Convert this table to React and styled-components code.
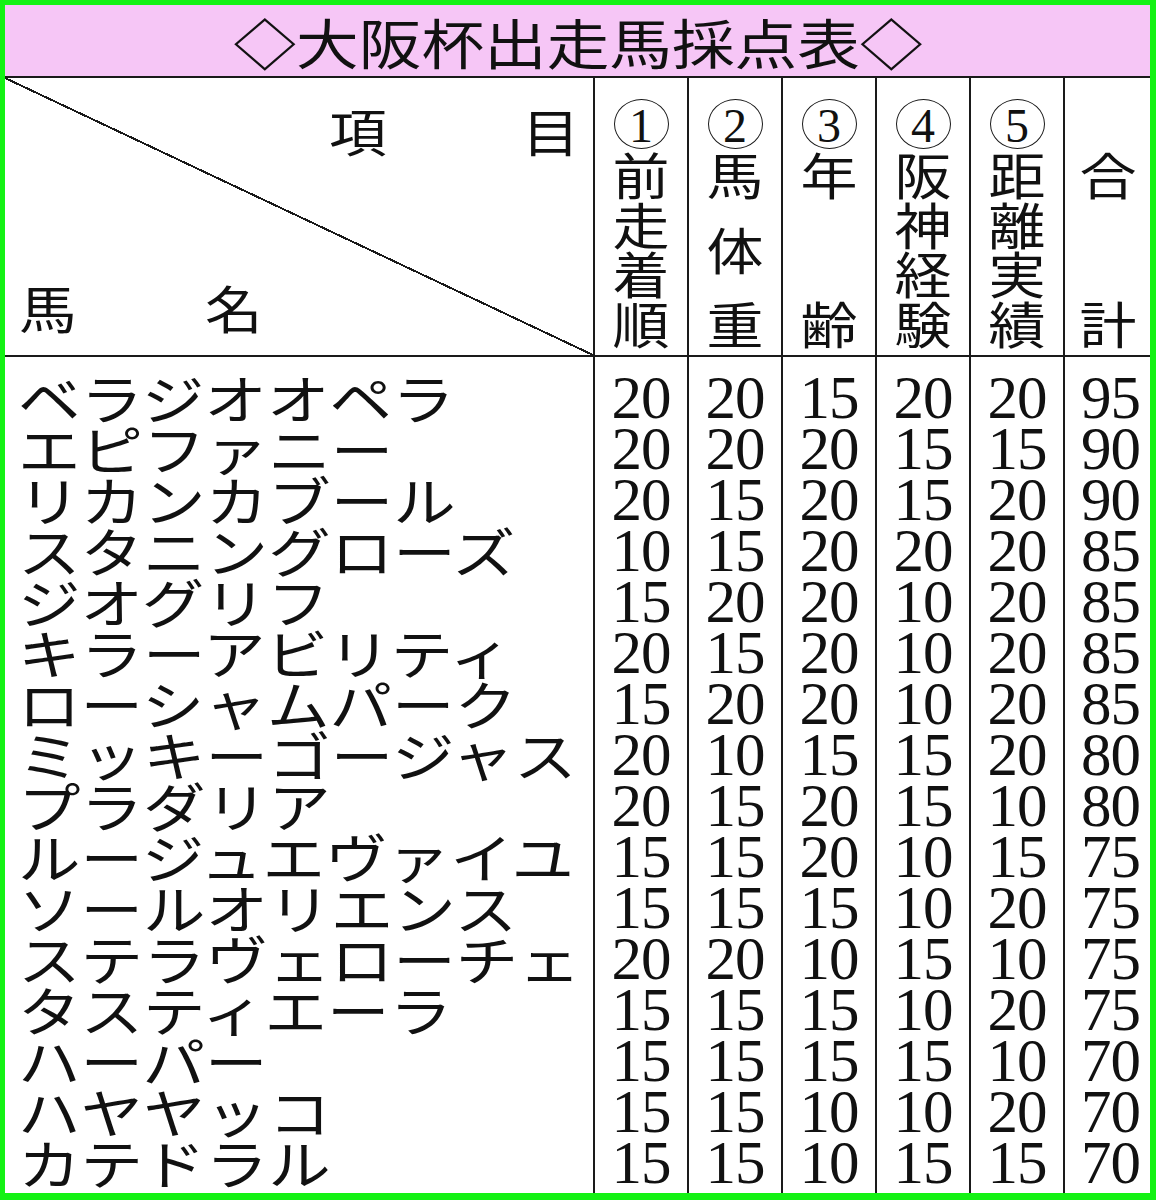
import styled, { createGlobalStyle } from "styled-components";

const GlobalStyle = createGlobalStyle`
  html, body {
    margin: 0;
    padding: 0;
    background: #ffffff;
  }
  body {
    font-family: "Noto Sans CJK JP", "Noto Sans", sans-serif;
    color: #111;
  }
`;

const GREEN = "#14f214";
const PINK = "#f6c6f6";
const LINE = "#1a1a1a";
const COLS = "588px repeat(5, 94px) 87px";

const Frame = styled.div`
  width: 1156px;
  height: 1200px;
  box-sizing: border-box;
  border: 5px solid ${GREEN};
  border-right-width: 6px;
  border-bottom-width: 7px;
  background: #fff;
  display: flex;
  flex-direction: column;
  overflow: hidden;
`;

const TitleBar = styled.div`
  height: 71px;
  background: ${PINK};
  border-bottom: 2px solid ${LINE};
  display: flex;
  align-items: center;
  justify-content: center;
`;

const TitleText = styled.span`
  display: inline-block;
  font-size: 54px;
  font-weight: 400;
  line-height: 1;
  white-space: nowrap;
  transform: scaleX(1.16);
  margin-top: 2px;
`;

const HeaderRow = styled.div`
  display: grid;
  grid-template-columns: ${COLS};
  height: 277px;
  border-bottom: 2px solid ${LINE};
`;

const NameHead = styled.div`
  display: flex;
  flex-direction: column;
  justify-content: space-between;
  padding: 27px 0 22px 0;
  background: linear-gradient(
    to top right,
    transparent calc(50% - 1px),
    ${LINE} calc(50% - 1px),
    ${LINE} calc(50% + 1px),
    transparent calc(50% + 1px)
  );
`;

const HeadLine = styled.div`
  display: flex;
  padding-left: ${(p) => p.$pad}px;
  gap: ${(p) => p.$gap}px;
`;

const HeadWord = styled.span`
  display: inline-block;
  width: 50px;
  font-size: 51px;
  line-height: 51px;
  transform: scaleX(1.13);
  transform-origin: left center;
`;

const ItemHead = styled.div`
  border-left: 2px solid ${LINE};
  display: flex;
  flex-direction: column;
  align-items: center;
  padding-top: 21px;
`;

const Circled = styled.div`
  width: 55px;
  height: 50px;
  flex-shrink: 0;
  box-sizing: border-box;
  border: ${(p) => (p.$empty ? "none" : `1.6px solid ${LINE}`)};
  border-radius: 50%;
  display: flex;
  align-items: center;
  justify-content: center;
  font-family: "Liberation Serif", serif;
  font-size: 48px;
  line-height: 1;
  padding-top: 4px;
`;

const Stack = styled.div`
  height: 198px;
  display: flex;
  flex-direction: column;
  justify-content: space-between;
  align-items: center;
`;

const StackChar = styled.span`
  display: inline-block;
  font-size: 50px;
  line-height: 49px;
  transform: scaleX(1.14);
`;

const Body = styled.div`
  flex: 1;
  display: grid;
  grid-template-columns: ${COLS};
`;

const Column = styled.div`
  display: flex;
  flex-direction: column;
  align-items: ${(p) => (p.$names ? "flex-start" : "center")};
  padding-top: 15px;
  padding-left: ${(p) => (p.$names ? "13px" : "0")};
  border-left: ${(p) => (p.$names ? "none" : `2px solid ${LINE}`)};
`;

const NameCell = styled.div`
  height: 51px;
  font-size: 53px;
  line-height: 51px;
  white-space: nowrap;
  transform: scaleX(1.18);
  transform-origin: left center;
`;

const NumCell = styled.div`
  height: 51px;
  font-family: "Liberation Serif", "Times New Roman", serif;
  font-size: 61px;
  line-height: 51px;
  letter-spacing: -1px;
  padding-left: ${(p) => (p.$total ? "6px" : "0")};
`;

const rows = [
  ["ベラジオオペラ", 20, 20, 15, 20, 20, 95],
  ["エピファニー", 20, 20, 20, 15, 15, 90],
  ["リカンカブール", 20, 15, 20, 15, 20, 90],
  ["スタニングローズ", 10, 15, 20, 20, 20, 85],
  ["ジオグリフ", 15, 20, 20, 10, 20, 85],
  ["キラーアビリティ", 20, 15, 20, 10, 20, 85],
  ["ローシャムパーク", 15, 20, 20, 10, 20, 85],
  ["ミッキーゴージャス", 20, 10, 15, 15, 20, 80],
  ["プラダリア", 20, 15, 20, 15, 10, 80],
  ["ルージュエヴァイユ", 15, 15, 20, 10, 15, 75],
  ["ソールオリエンス", 15, 15, 15, 10, 20, 75],
  ["ステラヴェローチェ", 20, 20, 10, 15, 10, 75],
  ["タスティエーラ", 15, 15, 15, 10, 20, 75],
  ["ハーパー", 15, 15, 15, 15, 10, 70],
  ["ハヤヤッコ", 15, 15, 10, 10, 20, 70],
  ["カテドラル", 15, 15, 10, 15, 15, 70],
];

const items = [
  { no: "1", chars: ["前", "走", "着", "順"] },
  { no: "2", chars: ["馬", "体", "重"] },
  { no: "3", chars: ["年", "齢"] },
  { no: "4", chars: ["阪", "神", "経", "験"] },
  { no: "5", chars: ["距", "離", "実", "績"] },
  { no: "", chars: ["合", "計"] },
];

export default function App() {
  return (
    <>
      <GlobalStyle />
      <Frame>
        <TitleBar>
          <TitleText>◇大阪杯出走馬採点表◇</TitleText>
        </TitleBar>
        <HeaderRow>
          <NameHead>
            <HeadLine $pad={324} $gap={143}>
              <HeadWord>項</HeadWord>
              <HeadWord>目</HeadWord>
            </HeadLine>
            <HeadLine $pad={14} $gap={136}>
              <HeadWord>馬</HeadWord>
              <HeadWord>名</HeadWord>
            </HeadLine>
          </NameHead>
          {items.map((item, i) => (
            <ItemHead key={i}>
              <Circled $empty={!item.no}>{item.no}</Circled>
              <Stack>
                {item.chars.map((c) => (
                  <StackChar key={c}>{c}</StackChar>
                ))}
              </Stack>
            </ItemHead>
          ))}
        </HeaderRow>
        <Body>
          <Column $names>
            {rows.map((r) => (
              <NameCell key={r[0]}>{r[0]}</NameCell>
            ))}
          </Column>
          {[1, 2, 3, 4, 5, 6].map((c) => (
            <Column key={c}>
              {rows.map((r) => (
                <NumCell key={r[0]} $total={c === 6}>
                  {r[c]}
                </NumCell>
              ))}
            </Column>
          ))}
        </Body>
      </Frame>
    </>
  );
}
